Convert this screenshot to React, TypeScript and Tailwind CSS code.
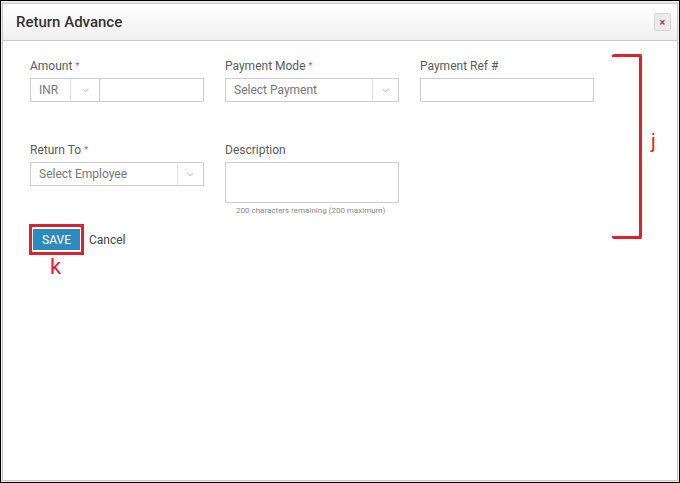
import { ChevronDown } from "lucide-react";

const Label = ({ text, req }: { text: string; req?: boolean }) => (
  <div className="text-[12px] leading-[14px] text-[#5a5a5a] mb-[5px]">
    {text}
    {req && <span className="text-[#e0485a] ml-[3px] text-[9px] align-top">*</span>}
  </div>
);

const Chevron = () => (
  <ChevronDown className="w-[11px] h-[11px] text-[#b0b0b0]" strokeWidth={2} />
);

export default function App() {
  return (
    <div
      className="w-[680px] h-[483px] border border-black bg-[#e9e9e9] relative overflow-hidden"
      style={{ fontFamily: "Roboto, 'Liberation Sans', sans-serif" }}
    >
      <div className="mt-[2px] ml-[1px] mr-[1px] h-[478px] border border-[#c9c9c9] bg-white flex flex-col">
        {/* Header */}
        <div className="h-[37px] shrink-0 flex items-center justify-between pl-[13px] pr-[15px] bg-gradient-to-b from-white to-[#f0f0f0] border-b border-[#c8c8c8]">
          <span className="text-[15px] font-medium text-[#333]">Return Advance</span>
          <button className="w-[17px] h-[18px] mr-[-9px] rounded-[2px] border border-[#d5d5d5] bg-[#ebebeb] flex items-center justify-center text-[#d0324a] text-[11px] font-bold leading-none">
            ×
          </button>
        </div>

        {/* Body */}
        <div className="pl-[27px] pt-[18px]">
          <div className="flex gap-[21px]">
            <div className="w-[174px]">
              <Label text="Amount" req />
              <div className="flex h-[24px] border border-[#ccc] text-[12px] text-[#777]">
                <div className="w-[40px] flex items-center pl-[8px] border-r border-[#ddd]">INR</div>
                <div className="w-[29px] flex items-center justify-center border-r border-[#ccc]">
                  <Chevron />
                </div>
                <div className="flex-1" />
              </div>
            </div>
            <div className="w-[174px]">
              <Label text="Payment Mode" req />
              <div className="flex h-[24px] border border-[#ccc] text-[12px] text-[#777]">
                <div className="flex-1 flex items-center pl-[8px]">Select Payment</div>
                <div className="w-[26px] flex items-center justify-center border-l border-[#e2e2e2]">
                  <Chevron />
                </div>
              </div>
            </div>
            <div className="w-[174px]">
              <Label text="Payment Ref #" />
              <div className="h-[24px] border border-[#ccc]" />
            </div>
          </div>

          <div className="flex gap-[21px] mt-[41px]">
            <div className="w-[174px]">
              <Label text="Return To" req />
              <div className="flex h-[24px] border border-[#ccc] text-[12px] text-[#777]">
                <div className="flex-1 flex items-center pl-[8px]">Select Employee</div>
                <div className="w-[26px] flex items-center justify-center border-l border-[#e2e2e2]">
                  <Chevron />
                </div>
              </div>
            </div>
            <div className="w-[174px]">
              <Label text="Description" />
              <div className="h-[41px] border border-[#ccc]" />
              <div className="text-[8px] leading-[10px] text-[#888] mt-[3px] pl-[11px]">
                200 characters remaining (200 maximum)
              </div>
            </div>
          </div>

          <div className="flex items-center mt-[8px] ml-[-1px]">
            <div className="border-[3px] border-[#e0202e] px-[1px] py-[2px]">
              <button className="w-[47px] h-[21px] bg-[#2b8bbf] text-white text-[12px] flex items-center justify-center">
                SAVE
              </button>
            </div>
            <span className="ml-[5px] text-[12px] text-[#444]">Cancel</span>
          </div>
        </div>
      </div>

      {/* annotations */}
      <div className="absolute left-[49px] top-[255px] text-[22px] leading-none text-[#e0202e]">k</div>
      <div className="absolute left-[611px] top-[53px] w-[30px] h-[185px] border-t-[3px] border-r-[3px] border-b-[3px] border-[#e0202e] rounded-[2px]" />
      <div className="absolute left-[650px] top-[130px] text-[20px] leading-none text-[#e0202e]">j</div>
    </div>
  );
}
